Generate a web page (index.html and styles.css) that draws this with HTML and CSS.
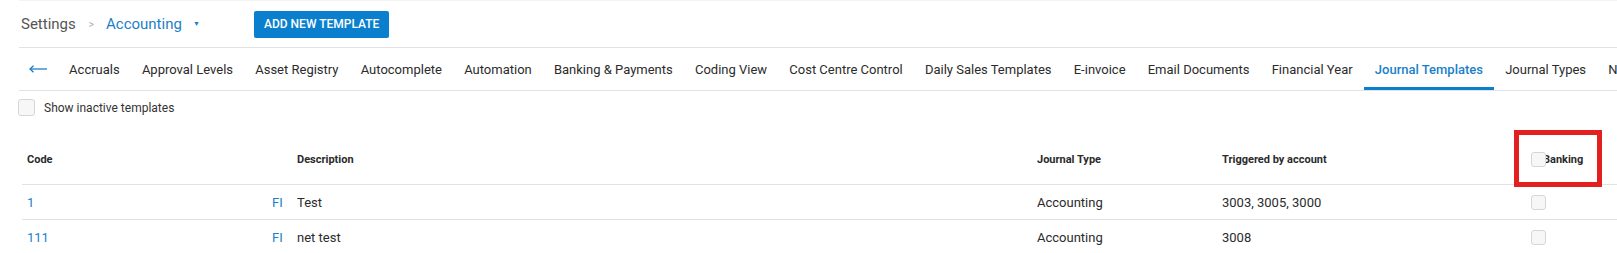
FILE: index.html
```html
<!DOCTYPE html>
<html lang="en">
<head>
    <meta charset="UTF-8">
    <meta name="viewport" content="width=device-width, initial-scale=1.0">
    <title>Settings - Accounting - Journal Templates</title>
    <link rel="stylesheet" href="styles.css">
</head>
<body>

    <div class="topbar">
        <div class="crumbs">
            <span class="crumb-root">Settings</span>
            <span class="crumb-sep">&gt;</span>
            <span class="crumb-current">Accounting</span>
            <span class="caret">&#9660;</span>
        </div>
        <button class="btn-primary">ADD NEW TEMPLATE</button>
    </div>

    <nav class="tabs">
        <span class="back">
            <svg width="18" height="8" viewBox="0 0 18 8">
                <path d="M1 4 H18" stroke="#1a7fc9" stroke-width="1.3" fill="none"/>
                <path d="M4.5 0.8 L1 4 L4.5 7.2" stroke="#1a7fc9" stroke-width="1.3" fill="none"/>
            </svg>
        </span>
        <a class="tab">Accruals</a>
        <a class="tab">Approval Levels</a>
        <a class="tab">Asset Registry</a>
        <a class="tab">Autocomplete</a>
        <a class="tab">Automation</a>
        <a class="tab">Banking &amp; Payments</a>
        <a class="tab">Coding View</a>
        <a class="tab">Cost Centre Control</a>
        <a class="tab">Daily Sales Templates</a>
        <a class="tab">E-invoice</a>
        <a class="tab">Email Documents</a>
        <a class="tab">Financial Year</a>
        <a class="tab active">Journal Templates</a>
        <a class="tab">Journal Types</a>
        <a class="tab">Numbering</a>
    </nav>

    <div class="filter">
        <span class="checkbox large"></span>
        <label>Show inactive templates</label>
    </div>

    <table class="grid">
        <colgroup>
            <col class="c-code">
            <col class="c-fi">
            <col class="c-desc">
            <col class="c-type">
            <col class="c-trig">
            <col class="c-bank">
        </colgroup>
        <thead>
            <tr>
                <th>Code</th>
                <th></th>
                <th>Description</th>
                <th>Journal Type</th>
                <th>Triggered by account</th>
                <th class="bank-head">
                    <div class="bank-inner">
                        <span class="checkbox"></span>
                        <span class="bank-label">Banking</span>
                    </div>
                    <div class="highlight"></div>
                </th>
            </tr>
        </thead>
        <tbody>
            <tr>
                <td class="link">1</td>
                <td class="link">FI</td>
                <td>Test</td>
                <td>Accounting</td>
                <td>3003, 3005, 3000</td>
                <td><span class="checkbox"></span></td>
            </tr>
            <tr>
                <td class="link">111</td>
                <td class="link">FI</td>
                <td>net test</td>
                <td>Accounting</td>
                <td>3008</td>
                <td><span class="checkbox"></span></td>
            </tr>
        </tbody>
    </table>

</body>
</html>
```

FILE: styles.css
```css
body {
    margin: 0;
    background-color: #fff;
    color: #2b2b2b;
    font-family: Roboto, 'Liberation Sans', Arial, sans-serif;
    overflow: hidden;
}
.topbar {
    display: flex;
    align-items: center;
    height: 48px;
    margin-left: 19px;
    padding-left: 2px;
    border-top: 1px solid #f4f4f4;
    border-bottom: 1px solid #e2e2e2;
    box-sizing: border-box;
}
.crumbs {
    display: flex;
    align-items: center;
    width: 233px;
}
.crumb-root {
    font-size: 15px;
    color: #555;
}
.crumb-sep {
    font-size: 10px;
    color: #aaa;
    margin: 0 12px 0 13px;
}
.crumb-current {
    font-size: 15px;
    color: #1a7fc9;
}
.caret {
    font-size: 7px;
    color: #1a7fc9;
    margin-left: 11px;
}
.btn-primary {
    height: 27px;
    padding: 0 10px;
    background-color: #0a7fcd;
    color: #fff;
    border: none;
    border-radius: 2px;
    font-family: Roboto, 'Liberation Sans', Arial, sans-serif;
    font-size: 12px;
    font-weight: 500;
    cursor: pointer;
}
.tabs {
    display: flex;
    align-items: stretch;
    height: 42px;
    margin-left: 19px;
    border-bottom: 1px solid #e2e2e2;
    white-space: nowrap;
    overflow: hidden;
}
.back {
    display: flex;
    align-items: center;
    padding-left: 10px;
    margin-right: 11px;
}
.tab {
    display: flex;
    align-items: center;
    padding: 0 11.1px;
    font-size: 13px;
    color: #2b2b2b;
    border-bottom: 3px solid transparent;
    border-top: 3px solid transparent;
    cursor: pointer;
}
.tab.active {
    color: #1a7fc9;
    font-weight: 500;
    border-bottom-color: #0a7fcd;
}
.filter {
    display: flex;
    align-items: center;
    padding: 8px 0 0 18px;
    height: 17px;
}
.filter label {
    margin-left: 9px;
    font-size: 12px;
    color: #333;
}
.checkbox {
    display: inline-block;
    width: 15px;
    height: 15px;
    box-sizing: border-box;
    border: 1px solid #d6d6d6;
    border-radius: 3px;
    background-color: #f7f7f7;
    vertical-align: middle;
}
.checkbox.large {
    width: 17px;
    height: 17px;
}
.grid {
    margin-left: 22px;
    margin-top: 18px;
    width: 1595px;
    border-collapse: collapse;
    table-layout: fixed;
}
.c-code { width: 245px; }
.c-fi { width: 25px; }
.c-desc { width: 740px; }
.c-type { width: 185px; }
.c-trig { width: 309px; }
.c-bank { width: 91px; }
.grid th {
    height: 50px;
    padding: 0 0 0 5px;
    text-align: left;
    font-size: 11px;
    font-weight: 700;
    color: #2b2b2b;
    border-bottom: 1px solid #e2e2e2;
}
.grid td {
    height: 34px;
    padding: 0 0 0 5px;
    font-size: 13px;
    color: #2b2b2b;
    border-bottom: 1px solid #e2e2e2;
}
.grid td.link {
    color: #1a7fc9;
}
.bank-head {
    position: relative;
}
.bank-inner {
    display: flex;
    align-items: center;
}
.bank-inner .checkbox {
    position: relative;
    z-index: 1;
}
.bank-label {
    margin-left: -3px;
}
.highlight {
    position: absolute;
    left: -12px;
    top: -4px;
    width: 88px;
    height: 57px;
    box-sizing: border-box;
    border: 5px solid #e41f1f;
}
```
